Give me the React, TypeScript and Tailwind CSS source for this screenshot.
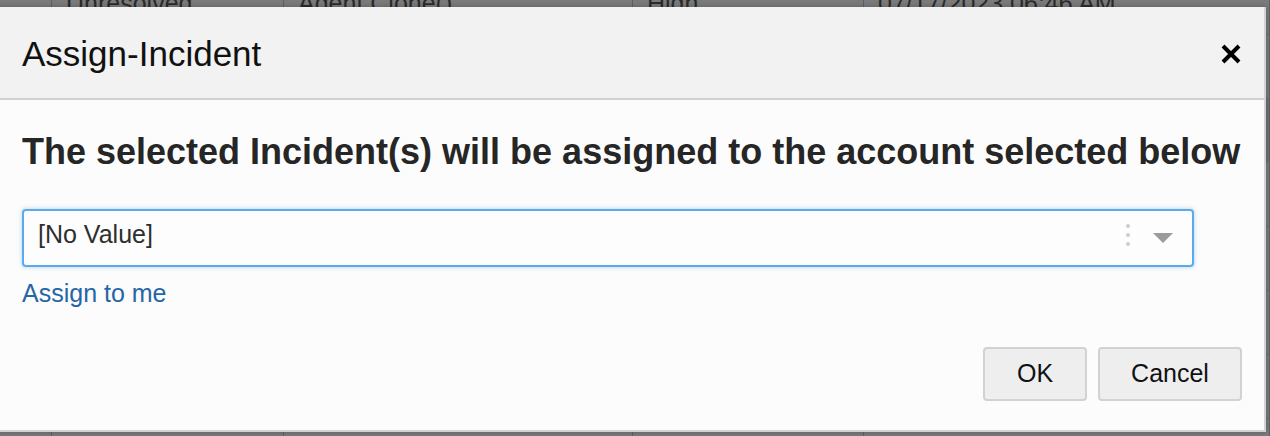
import React from 'react';

const cols = ['w-[52px]', 'w-[232px]', 'w-[349px]', 'w-[231px]', 'flex-1'];

const BackdropRow: React.FC<{ cells: string[]; className?: string }> = ({ cells, className }) => (
  <div className={`flex h-16 shrink-0 border-b border-[#6c6c6c] ${className ?? ''}`}>
    {cells.map((c, i) => (
      <div key={i} className={`${cols[i]} border-r border-[#606060] pl-[14px] text-[25px] text-[#2b2b2b] leading-[64px] whitespace-nowrap overflow-hidden`}>
        {c}
      </div>
    ))}
  </div>
);

const empty = ['', '', '', '', ''];

const App: React.FC = () => {
  return (
    <div className="relative w-[1270px] h-[436px] overflow-hidden bg-[#7b7b7b]" style={{ fontFamily: '"Liberation Sans", Arial, sans-serif' }}>
      {/* dimmed table behind the dialog */}
      <div className="flex flex-col -mt-[29px]">
        <BackdropRow cells={['', 'Unresolved', 'Agent Clone()', 'High', '07/17/2023 06:46 AM']} />
        <BackdropRow cells={empty} />
        <BackdropRow cells={empty} className="bg-[#6e7175]" />
        <BackdropRow cells={empty} />
        <BackdropRow cells={empty} />
        <BackdropRow cells={empty} />
        <BackdropRow cells={empty} />
        <BackdropRow cells={empty} />
      </div>

      {/* dialog */}
      <div className="absolute left-[-2px] top-[7px] w-[1268px] h-[425px] flex flex-col bg-[#fcfcfc] border-r-2 border-b-2 border-[#d3d3d3] shadow-[0_0_6px_rgba(0,0,0,0.25)]">
        <div className="h-[93px] shrink-0 flex items-center justify-between bg-[#f2f2f2] border-b-2 border-[#d0d0d0] pl-[24px] pr-[23px] pt-[3px]">
          <h2 className="text-[35px] text-[#111] leading-[44px]">Assign-Incident</h2>
          <button className="w-[20px] h-[20px] flex items-center justify-center">
            <svg width="20" height="20" viewBox="0 0 20 20">
              <path d="M2 2 L18 18 M18 2 L2 18" stroke="#000" strokeWidth="4" strokeLinecap="butt" />
            </svg>
          </button>
        </div>

        <div className="flex-1 flex flex-col pl-[24px] pr-[22px]">
          <h1 className="mt-[32px] text-[36px] font-bold text-[#262626] leading-[40px] whitespace-nowrap">
            The selected Incident(s) will be assigned to the account selected below
          </h1>

          <div className="mt-[37px] w-[1172px] h-[58px] shrink-0 flex items-center rounded-[4px] border-2 border-[#5caaea] bg-[#fdfdfd] shadow-[0_0_4px_rgba(92,170,234,0.5)] pl-[14px] pr-[19px]">
            <span className="flex-1 text-[25px] text-[#2e2e2e] leading-[30px] -mt-[8px]">[No Value]</span>
            <div className="flex flex-col gap-[5px] mr-[23px] -mt-[6px]">
              <span className="w-[4px] h-[4px] rounded-full bg-[#cdcdcd]" />
              <span className="w-[4px] h-[4px] rounded-full bg-[#cdcdcd]" />
              <span className="w-[4px] h-[4px] rounded-full bg-[#cdcdcd]" />
            </div>
            <svg width="20" height="10" viewBox="0 0 20 10" className="-mt-[1px]">
              <path d="M0 0 L20 0 L10 10 Z" fill="#9b9b9b" />
            </svg>
          </div>

          <a href="#" className="mt-[12px] self-start text-[25px] text-[#2566a6] leading-[28px]">
            Assign to me
          </a>

          <div className="mt-auto mb-[29px] flex justify-end gap-[11px]">
            <button className="w-[104px] h-[54px] rounded-[4px] border-2 border-[#d2d2d2] bg-[#eeeeee] text-[25px] text-[#111]">OK</button>
            <button className="w-[144px] h-[54px] rounded-[4px] border-2 border-[#d2d2d2] bg-[#eeeeee] text-[25px] text-[#111]">Cancel</button>
          </div>
        </div>
      </div>
    </div>
  );
};

export default App;
